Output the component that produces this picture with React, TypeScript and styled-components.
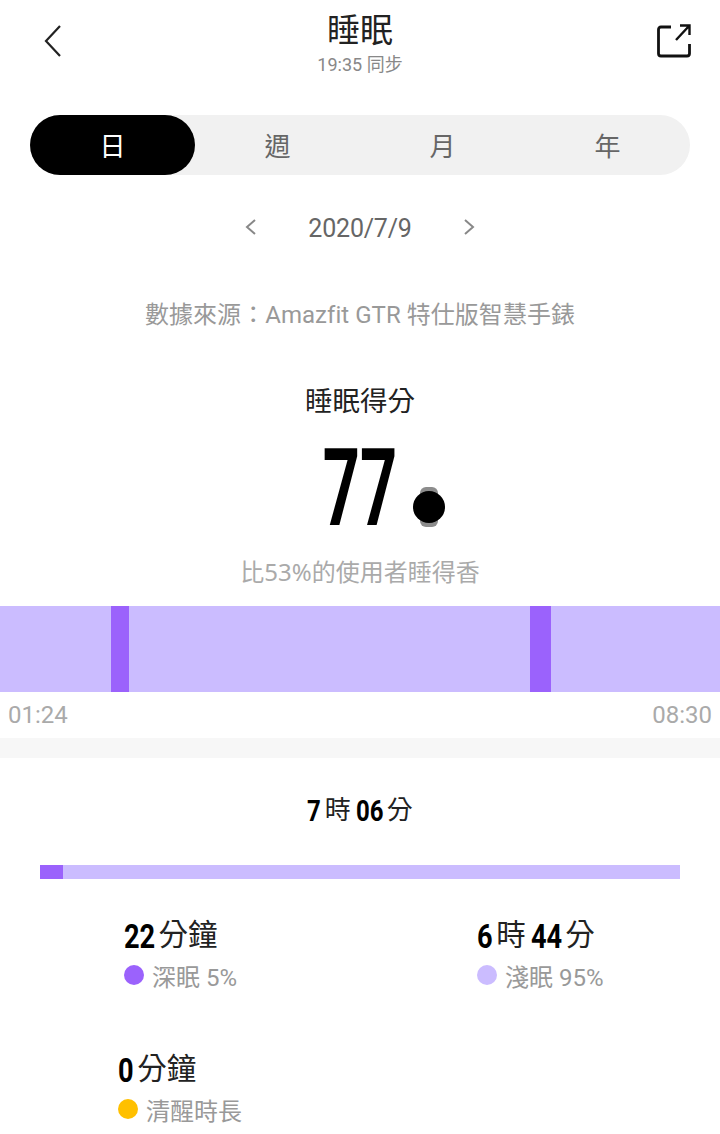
import styled, { createGlobalStyle } from 'styled-components';

const GlobalStyle = createGlobalStyle`
  html, body {
    margin: 0;
    padding: 0;
    background: #ffffff;
    font-family: Roboto, "Noto Sans CJK TC", sans-serif;
  }
  * {
    box-sizing: border-box;
  }
`;

const Page = styled.div`
  width: 720px;
  height: 1134px;
  overflow: hidden;
  background: #ffffff;
`;

const Header = styled.header`
  height: 115px;
  padding: 12px 28px 0;
  display: grid;
  grid-template-columns: 1fr auto 1fr;
  align-items: flex-start;
`;

const IconButton = styled.div<{ $end?: boolean }>`
  height: 40px;
  margin-top: 9px;
  display: flex;
  align-items: center;
  justify-content: ${(p) => (p.$end ? 'flex-end' : 'flex-start')};
`;

const TitleBlock = styled.div`
  display: flex;
  flex-direction: column;
  align-items: center;
`;

const Title = styled.h1`
  margin: 0;
  font-size: 33px;
  line-height: 38px;
  font-weight: 400;
  color: #222222;
`;

const Sync = styled.div`
  font-size: 18px;
  line-height: 24px;
  margin-top: 3px;
  color: #888888;
`;

const Tabs = styled.div`
  margin: 0 30px;
  height: 60px;
  border-radius: 30px;
  background: #f1f1f1;
  display: grid;
  grid-template-columns: repeat(4, 165px);
`;

const Tab = styled.div<{ $active?: boolean }>`
  border-radius: 30px;
  padding-bottom: 2px;
  display: flex;
  align-items: center;
  justify-content: center;
  font-size: 26px;
  background: ${(p) => (p.$active ? '#000000' : 'transparent')};
  color: ${(p) => (p.$active ? '#ffffff' : '#666666')};
`;

const DateRow = styled.div`
  height: 36px;
  margin-top: 35px;
  display: flex;
  justify-content: center;
  align-items: center;
  gap: 41px;
`;

const DateText = styled.span`
  width: 120px;
  text-align: center;
  font-size: 25px;
  letter-spacing: -0.2px;
  color: #666666;
`;

const ChevronIcon = styled.svg`
  margin-top: -2px;
`;

const Source = styled.div`
  margin-top: 51px;
  text-align: center;
  font-size: 24px;
  line-height: 36px;
  letter-spacing: 0.04px;
  color: #999999;
`;

const ScoreLabel = styled.div`
  margin-top: 51px;
  text-align: center;
  font-size: 27.5px;
  line-height: 36px;
  color: #222222;
`;

const ScoreRow = styled.div`
  height: 115px;
  margin-top: 15px;
  padding-top: 1px;
  display: flex;
  justify-content: center;
  align-items: flex-start;
  position: relative;
`;

const ScoreNumber = styled.div`
  font-size: 108px;
  line-height: 104px;
  font-weight: 700;
  color: #000000;
  transform: scaleX(0.6);
`;

const WatchBadge = styled.svg`
  position: absolute;
  left: 412px;
  top: 51px;
`;

const Percentile = styled.div`
  margin-top: 4px;
  text-align: center;
  font-family: "Noto Sans", "Noto Sans CJK TC", sans-serif;
  font-size: 24px;
  line-height: 36px;
  color: #aaaaaa;
`;

const Chart = styled.div`
  margin-top: 16px;
  height: 86px;
  background: #cbbcff;
  display: grid;
  grid-template-columns: 111px 18px 401px 21px 1fr;
`;

const ChartDeep = styled.div`
  background: #9b62fc;
`;

const TimeAxis = styled.div`
  height: 46px;
  padding: 0 8px;
  display: flex;
  justify-content: space-between;
  align-items: center;
  font-size: 24px;
  color: #aaaaaa;
`;

const Divider = styled.div`
  height: 20px;
  background: #f7f7f7;
`;

const Total = styled.div`
  margin-top: 35px;
  height: 36px;
  display: flex;
  justify-content: center;
  align-items: center;
`;

const Part = styled.span`
  display: inline-flex;
  align-items: center;
  & + & {
    margin-left: 5px;
  }
`;

const Num = styled.span<{ $size: number; $chars: number }>`
  display: inline-block;
  width: ${(p) => p.$size * 0.448 * p.$chars}px;
  font-weight: 700;
  font-size: ${(p) => p.$size}px;
  line-height: 1;
  white-space: nowrap;
  transform: scaleX(0.8);
  transform-origin: left center;
  color: #000000;
`;

const Unit = styled.span<{ $size: number }>`
  font-size: ${(p) => p.$size}px;
  line-height: 1.2;
  margin-left: 4px;
  color: #222222;
`;

const Progress = styled.div`
  margin: 36px 40px 0;
  height: 14px;
  background: #cbbcff;
`;

const ProgressDeep = styled.div`
  height: 100%;
  background: #9b62fc;
`;

const Stats = styled.div`
  margin-top: 37px;
  display: grid;
  grid-template-columns: 477px 1fr;
  row-gap: 55px;
`;

const Stat = styled.div<{ $indent: number }>`
  padding-left: ${(p) => p.$indent}px;
`;

const StatValue = styled.div`
  height: 40px;
  display: flex;
  align-items: center;
`;

const StatLabel = styled.div`
  margin-top: -1px;
  height: 40px;
  display: flex;
  align-items: center;
  gap: 8px;
  font-size: 24px;
  color: #999999;
`;

const Dot = styled.span<{ $color: string }>`
  width: 20px;
  height: 20px;
  border-radius: 50%;
  background: ${(p) => p.$color};
`;

function Duration({ parts, numSize, unitSize }: { parts: [string, string][]; numSize: number; unitSize: number }) {
  return (
    <>
      {parts.map(([num, unit]) => (
        <Part key={unit}>
          <Num $size={numSize} $chars={num.length}>{num}</Num>
          <Unit $size={unitSize}>{unit}</Unit>
        </Part>
      ))}
    </>
  );
}

function Chevron({ dir }: { dir: 'left' | 'right' }) {
  return (
    <ChevronIcon width="16" height="20" viewBox="0 0 16 20" fill="none">
      <path
        d={dir === 'left' ? 'M12 3 L4 10 L12 17' : 'M4 3 L12 10 L4 17'}
        stroke="#888888"
        strokeWidth="2"
      />
    </ChevronIcon>
  );
}

const stats = [
  { value: [['22', '分鐘']], label: '深眠 5%', color: '#9b62fc', indent: 124 },
  { value: [['6', '時'], ['44', '分']], label: '淺眠 95%', color: '#cbbcff', indent: 0 },
  { value: [['0', '分鐘']], label: '清醒時長', color: '#ffc000', indent: 118 },
] as { value: [string, string][]; label: string; color: string; indent: number }[];

export default function App() {
  return (
    <Page>
      <GlobalStyle />
      <Header>
        <IconButton>
          <svg width="36" height="36" viewBox="0 0 36 36" fill="none">
            <path d="M32 3 L18 18 L32 33" stroke="#222222" strokeWidth="2.2" />
          </svg>
        </IconButton>
        <TitleBlock>
          <Title>睡眠</Title>
          <Sync>19:35 同步</Sync>
        </TitleBlock>
        <IconButton $end>
          <svg width="36" height="36" viewBox="0 0 36 36" fill="none">
            <path
              d="M15 4 H5 Q2.500 4 2.500 6.500 V30.500 Q2.500 33 5 33 H31 Q33.500 33 33.500 30.500 V21"
              stroke="#111111"
              strokeWidth="2.8"
            />
            <path d="M20 17 L33 3 M24 2.500 H33.500 V12" stroke="#111111" strokeWidth="2.4" />
          </svg>
        </IconButton>
      </Header>

      <Tabs>
        <Tab $active>日</Tab>
        <Tab>週</Tab>
        <Tab>月</Tab>
        <Tab>年</Tab>
      </Tabs>

      <DateRow>
        <Chevron dir="left" />
        <DateText>2020/7/9</DateText>
        <Chevron dir="right" />
      </DateRow>

      <Source>數據來源：Amazfit GTR 特仕版智慧手錶</Source>

      <ScoreLabel>睡眠得分</ScoreLabel>
      <ScoreRow>
        <ScoreNumber>77</ScoreNumber>
        <WatchBadge width="34" height="42" viewBox="0 0 34 42">
          <rect x="8" y="1" width="18" height="40" rx="6" fill="#8c8c8c" />
          <circle cx="17" cy="21" r="16" fill="#000000" />
        </WatchBadge>
      </ScoreRow>
      <Percentile>比53%的使用者睡得香</Percentile>

      <Chart>
        <div />
        <ChartDeep />
        <div />
        <ChartDeep />
        <div />
      </Chart>
      <TimeAxis>
        <span>01:24</span>
        <span>08:30</span>
      </TimeAxis>
      <Divider />

      <Total>
        <Duration parts={[['7', '時'], ['06', '分']]} numSize={30} unitSize={26} />
      </Total>
      <Progress>
        <ProgressDeep style={{ width: `${(23 / 640) * 100}%` }} />
      </Progress>

      <Stats>
        {stats.map((s) => (
          <Stat key={s.label} $indent={s.indent}>
            <StatValue>
              <Duration parts={s.value} numSize={34} unitSize={29.5} />
            </StatValue>
            <StatLabel>
              <Dot $color={s.color} />
              {s.label}
            </StatLabel>
          </Stat>
        ))}
      </Stats>
    </Page>
  );
}
